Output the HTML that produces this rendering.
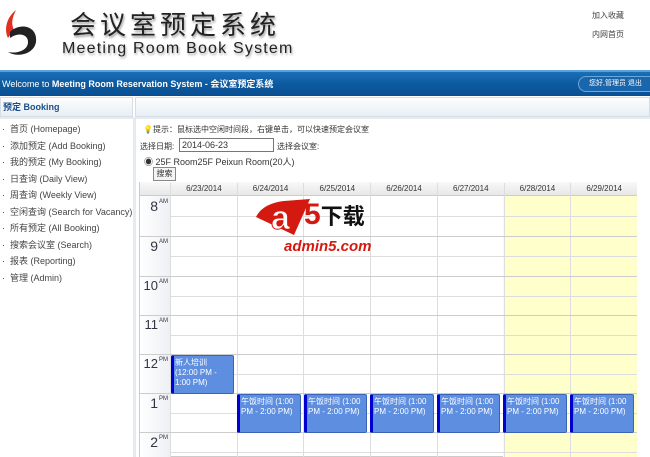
<!DOCTYPE html>
<html><head><meta charset="utf-8"><style>
*{margin:0;padding:0;box-sizing:border-box}
body{width:650px;height:457px;overflow:hidden;background:#fff;font-family:"Liberation Sans","Noto Sans CJK SC",sans-serif;font-size:9px;color:#333;position:relative}
.a{position:absolute}
.t1{font-family:"Noto Sans CJK SC",sans-serif;font-size:26px;color:#222;letter-spacing:4px;left:70px;top:5px;text-shadow:1px 2px 2px #999}
.t2{font-size:16px;color:#222;letter-spacing:1.2px;left:62px;top:40px;text-shadow:1px 2px 2px #aaa}
.bar{left:0;top:70px;width:650px;height:26px;background:linear-gradient(#1b6fb5,#0d5aa0 50%,#0a4f92);border-top:2px solid #5aa0dc;color:#fff;font-size:9px;line-height:24px;padding-left:2px}
.side li{list-style:none;height:16.5px;font-size:9px;color:#444}
.hr{position:absolute;left:140px;width:497px;border-top:1px solid #ddd}
.ev{position:absolute;background:#5e8ee0;border:1px solid #3b64b8;border-left:3px solid #0000d0;border-radius:2px;color:#fff;font-size:8px;line-height:10px;padding:2px 1px;white-space:nowrap;overflow:hidden}
.hl{position:absolute;left:140px;width:30px;text-align:right;font-size:14px;color:#334;padding-right:12px}
.hl sup{font-size:6px;position:absolute;right:2px;top:1px}
</style></head><body>
<svg class="a" style="left:2px;top:8px" width="44" height="52" viewBox="0 0 44 52"><path d="M14 2 C4 10 2 22 6 30 L12 22 C9 16 10 10 14 2Z" fill="#e03020"/><path d="M8 24 C18 14 36 18 34 34 C32 46 16 50 6 44 C16 46 26 42 26 34 C26 26 16 24 8 30Z" fill="#222"/></svg>
<div class="a t1">会议室预定系统</div>
<div class="a t2">Meeting Room Book System</div>
<div class="a" style="left:592px;top:10px;font-size:8px;color:#444">加入收藏</div>
<div class="a" style="left:592px;top:29px;font-size:8px;color:#444">内网首页</div>
<div class="a bar">Welcome to <b>Meeting Room Reservation System - 会议室预定系统</b></div>
<div class="a" style="left:578px;top:76px;width:72px;height:16px;border:1px solid #6aa8dc;border-right:none;border-radius:8px 0 0 8px;color:#fff;font-size:7px;line-height:14px;padding-left:10px;background:#1a66ac">您好,管理员 退出</div>
<div class="a" style="left:0;top:97px;width:133px;height:20px;background:linear-gradient(#fdfdfd,#e8eef4);border:1px solid #d5dde5;color:#1a4f8a;font-weight:bold;font-size:9px;line-height:18px;padding-left:2px">预定 Booking</div>
<div class="a" style="left:135px;top:97px;width:515px;height:20px;background:linear-gradient(#fdfdfd,#e8eef4);border:1px solid #d5dde5"></div>
<div class="a" style="left:133px;top:117px;width:3px;height:340px;background:#e6ebf0"></div>
<div class="a" style="left:0;top:117px;width:133px;height:2px;background:#e6ebf0"></div>
<div class="a" style="left:136px;top:117px;width:514px;height:2px;background:#e6ebf0"></div>
<ul class="a side" style="left:2px;top:122px">
<li>·&nbsp; 首页 (Homepage)</li><li>·&nbsp; 添加预定 (Add Booking)</li><li>·&nbsp; 我的预定 (My Booking)</li><li>·&nbsp; 日查询 (Daily View)</li><li>·&nbsp; 周查询 (Weekly View)</li><li>·&nbsp; 空闲查询 (Search for Vacancy)</li><li>·&nbsp; 所有预定 (All Booking)</li><li>·&nbsp; 搜索会议室 (Search)</li><li>·&nbsp; 报表 (Reporting)</li><li>·&nbsp; 管理 (Admin)</li></ul>
<div class="a" style="left:143px;top:124px;font-size:8px"><span style="color:#e8b800">💡</span>提示：鼠标选中空闲时间段，右键单击，可以快速预定会议室</div>
<div class="a" style="left:140px;top:141px;font-size:8px">选择日期:</div>
<div class="a" style="left:179px;top:138px;width:95px;height:14px;border:1px solid #777;font-size:9px;padding-left:2px;line-height:12px">2014-06-23</div>
<div class="a" style="left:277px;top:141px;font-size:8px">选择会议室:</div>
<div class="a" style="left:144px;top:155px;font-size:9px">◉ 25F Room25F Peixun Room(20人)</div>
<div class="a" style="left:153px;top:167px;width:23px;height:14px;border:1px solid #888;background:#f4f4f4;font-size:8px;text-align:center;line-height:12px">搜索</div>
<div class="a" style="left:139px;top:182px;width:498px;height:275px;border:1px solid #ccc"></div>
<div class="a" style="left:503px;top:196px;width:134px;height:261px;background:#ffffcc"></div>
<div class="a" style="left:140px;top:182px;width:497px;height:14px;background:linear-gradient(#f8f8f8,#e8e8e8);border-bottom:1px solid #ccc"></div>
<div class="a" style="left:140px;top:196px;width:30px;height:261px;background:linear-gradient(90deg,#fff,#eef0f4)"></div>
<div class="a" style="left:170px;top:183px;width:467px;height:274px;display:flex">
<div style="flex:1;border-left:1px solid #ddd;text-align:center;font-size:8px;line-height:12px">6/23/2014</div><div style="flex:1;border-left:1px solid #ddd;text-align:center;font-size:8px;line-height:12px">6/24/2014</div><div style="flex:1;border-left:1px solid #ddd;text-align:center;font-size:8px;line-height:12px">6/25/2014</div><div style="flex:1;border-left:1px solid #ddd;text-align:center;font-size:8px;line-height:12px">6/26/2014</div><div style="flex:1;border-left:1px solid #ddd;text-align:center;font-size:8px;line-height:12px">6/27/2014</div><div style="flex:1;border-left:1px solid #ddd;text-align:center;font-size:8px;line-height:12px">6/28/2014</div><div style="flex:1;border-left:1px solid #ddd;text-align:center;font-size:8px;line-height:12px">6/29/2014</div></div>
<div class="hr" style="top:236px;border-color:#ccc"></div><div class="hr" style="top:216px;left:170px;width:467px"></div>
<div class="hr" style="top:276px;border-color:#ccc"></div><div class="hr" style="top:256px;left:170px;width:467px"></div>
<div class="hr" style="top:315px;border-color:#ccc"></div><div class="hr" style="top:296px;left:170px;width:467px"></div>
<div class="hr" style="top:354px;border-color:#ccc"></div><div class="hr" style="top:335px;left:170px;width:467px"></div>
<div class="hr" style="top:393px;border-color:#ccc"></div><div class="hr" style="top:374px;left:170px;width:467px"></div>
<div class="hr" style="top:432px;border-color:#ccc"></div><div class="hr" style="top:413px;left:170px;width:467px"></div>
<div class="hr" style="top:452px;left:170px;width:467px"></div>
<div class="hl" style="top:198px">8<sup>AM</sup></div>
<div class="hl" style="top:238px">9<sup>AM</sup></div>
<div class="hl" style="top:278px;font-size:13px">10<sup>AM</sup></div>
<div class="hl" style="top:317px;font-size:13px">11<sup>AM</sup></div>
<div class="hl" style="top:356px;font-size:13px">12<sup>PM</sup></div>
<div class="hl" style="top:395px">1<sup>PM</sup></div>
<div class="hl" style="top:434px">2<sup>PM</sup></div>
<div class="ev" style="left:171px;top:355px;width:63px;height:39px">新人培训<br>(12:00 PM -<br>1:00 PM)</div>
<div class="ev" style="left:237px;top:394px;width:64px;height:39px">午饭时间 (1:00<br>PM - 2:00 PM)</div>
<div class="ev" style="left:304px;top:394px;width:63px;height:39px">午饭时间 (1:00<br>PM - 2:00 PM)</div>
<div class="ev" style="left:370px;top:394px;width:64px;height:39px">午饭时间 (1:00<br>PM - 2:00 PM)</div>
<div class="ev" style="left:437px;top:394px;width:63px;height:39px">午饭时间 (1:00<br>PM - 2:00 PM)</div>
<div class="ev" style="left:503px;top:394px;width:64px;height:39px">午饭时间 (1:00<br>PM - 2:00 PM)</div>
<div class="ev" style="left:570px;top:394px;width:64px;height:39px">午饭时间 (1:00<br>PM - 2:00 PM)</div>
<svg class="a" style="left:254px;top:195px" width="60" height="50" viewBox="0 0 60 50"><path d="M2 22 L40 40 L56 4 L30 6 C14 8 6 14 2 22Z" fill="#d41a10"/><text x="17" y="34" font-family="Liberation Sans" font-weight="bold" font-size="34" fill="#fff" stroke="#d41a10" stroke-width="1">a</text></svg>
<div class="a" style="left:304px;top:198px;font-size:30px;font-weight:bold;color:#d41a10;font-family:'Liberation Sans','Noto Sans CJK SC',sans-serif">5<span style="font-size:22px;color:#111">下载</span></div>
<div class="a" style="left:284px;top:238px;font-size:15px;font-weight:bold;color:#d41a10;font-style:italic">admin5.com</div>
</body></html>
